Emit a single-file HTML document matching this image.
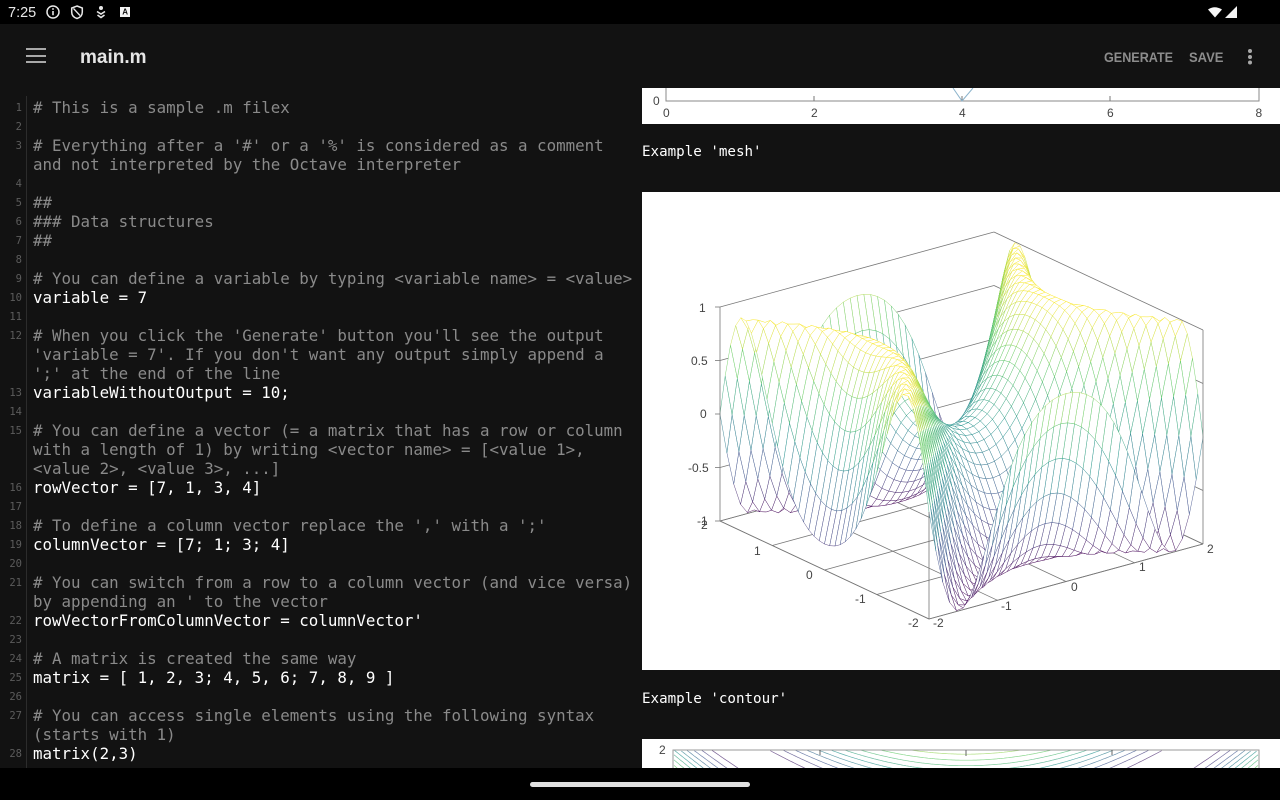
<!DOCTYPE html>
<html><head><meta charset="utf-8"><style>
html,body{margin:0;padding:0;background:#121212;width:1280px;height:800px;overflow:hidden}
#r{position:relative;width:1280px;height:800px;overflow:hidden;background:#121212}
.a{position:absolute}
#code{position:absolute;left:0;top:1px;width:640px;height:767px}
.c{position:absolute;left:33px;height:19px;line-height:19px;font:15.8px/19px "DejaVu Sans Mono","Liberation Mono",monospace;white-space:pre;color:#8a8a8a}
.w{color:#fff}
.n{position:absolute;left:0;width:22px;text-align:right;height:19px;font:10.5px/21px "DejaVu Sans Mono","Liberation Mono",monospace;color:#5c5c5c}
.e{position:absolute;left:642px;font:14.2px/20px "DejaVu Sans Mono","Liberation Mono",monospace;color:#fff;white-space:pre}
.b{position:absolute;top:47px;font:bold 14px/20px "Liberation Sans",sans-serif;color:#8c8c8c;transform-origin:0 50%;transform:scaleX(.9);white-space:pre}
svg text{font-family:"Liberation Sans",sans-serif;font-size:12px;fill:#444}
</style></head><body><div id="r">
<div class="a" style="left:0;top:0;width:1280px;height:24px;background:#000"></div>
<div class="a" style="left:8px;top:4px;font:14.5px/18px 'Liberation Sans',sans-serif;color:#e8e8e8">7:25</div>
<svg class="a" style="left:0;top:0" width="1280" height="24" viewBox="0 0 1280 24">
<circle cx="53" cy="12" r="6" fill="none" stroke="#e8e8e8" stroke-width="1.5"/><rect x="52.2" y="11" width="1.6" height="4.2" fill="#e8e8e8"/><rect x="52.2" y="8.2" width="1.6" height="1.6" fill="#e8e8e8"/>
<path d="M77 6l5.3 2v4c0 3.300-2.200 5.600-5.300 6.500-3.100-.9-5.300-3.200-5.300-6.500V8z" fill="none" stroke="#e8e8e8" stroke-width="1.5"/><path d="M73.500 8.500l6.500 7" stroke="#e8e8e8" stroke-width="1.3"/>
<path d="M97 11.500l4 2.500 4-2.500M97.500 15l3.500 2.500 3.500-2.500" fill="none" stroke="#e8e8e8" stroke-width="1.6"/><circle cx="101" cy="8" r="2" fill="#e8e8e8"/>
<rect x="120" y="7" width="10" height="10" fill="#f4f4f4"/><text x="122.3" y="14.5" style="font-size:8px;font-weight:bold;fill:#111">A</text>
<path d="M1208 9.500q6.500-4.500 14 0l-7 8z" fill="#f8f8f8"/><path d="M1237 6v12h-12z" fill="#f4f4f4"/>
</svg>
<svg class="a" style="left:0;top:24px" width="1280" height="64" viewBox="0 24 1280 64">
<rect x="26" y="48" width="20" height="2" fill="#a8a8a8"/><rect x="26" y="55" width="20" height="2" fill="#a8a8a8"/><rect x="26" y="61" width="20" height="2" fill="#a8a8a8"/>
<circle cx="1250" cy="51" r="2" fill="#a8a8a8"/><circle cx="1250" cy="57" r="2" fill="#a8a8a8"/><circle cx="1250" cy="62.5" r="2" fill="#a8a8a8"/>
</svg>
<div class="a" style="left:80px;top:46px;font:bold 19px/24px 'Liberation Sans',sans-serif;color:#e6e6e6">main.m</div>
<div class="b" style="left:1104px">GENERATE</div>
<div class="b" style="left:1189px;transform:scaleX(.93)">SAVE</div>

<div class="a" style="left:26px;top:96px;width:1px;height:672px;background:#2c2c2c"></div>
<div id="code">
<div class="n" style="top:97px">1</div><div class="c" style="top:97px"># This is a sample .m filex</div>
<div class="n" style="top:116px">2</div>
<div class="n" style="top:135px">3</div><div class="c" style="top:135px"># Everything after a '#' or a '%' is considered as a comment</div>
<div class="c" style="top:154px">and not interpreted by the Octave interpreter</div>
<div class="n" style="top:173px">4</div>
<div class="n" style="top:192px">5</div><div class="c" style="top:192px">##</div>
<div class="n" style="top:211px">6</div><div class="c" style="top:211px">### Data structures</div>
<div class="n" style="top:230px">7</div><div class="c" style="top:230px">##</div>
<div class="n" style="top:249px">8</div>
<div class="n" style="top:268px">9</div><div class="c" style="top:268px"># You can define a variable by typing &lt;variable name&gt; = &lt;value&gt;</div>
<div class="n" style="top:287px">10</div><div class="c w" style="top:287px">variable = 7</div>
<div class="n" style="top:306px">11</div>
<div class="n" style="top:325px">12</div><div class="c" style="top:325px"># When you click the 'Generate' button you'll see the output</div>
<div class="c" style="top:344px">'variable = 7'. If you don't want any output simply append a</div>
<div class="c" style="top:363px">';' at the end of the line</div>
<div class="n" style="top:382px">13</div><div class="c w" style="top:382px">variableWithoutOutput = 10;</div>
<div class="n" style="top:401px">14</div>
<div class="n" style="top:420px">15</div><div class="c" style="top:420px"># You can define a vector (= a matrix that has a row or column</div>
<div class="c" style="top:439px">with a length of 1) by writing &lt;vector name&gt; = [&lt;value 1&gt;,</div>
<div class="c" style="top:458px">&lt;value 2&gt;, &lt;value 3&gt;, ...]</div>
<div class="n" style="top:477px">16</div><div class="c w" style="top:477px">rowVector = [7, 1, 3, 4]</div>
<div class="n" style="top:496px">17</div>
<div class="n" style="top:515px">18</div><div class="c" style="top:515px"># To define a column vector replace the ',' with a ';'</div>
<div class="n" style="top:534px">19</div><div class="c w" style="top:534px">columnVector = [7; 1; 3; 4]</div>
<div class="n" style="top:553px">20</div>
<div class="n" style="top:572px">21</div><div class="c" style="top:572px"># You can switch from a row to a column vector (and vice versa)</div>
<div class="c" style="top:591px">by appending an ' to the vector</div>
<div class="n" style="top:610px">22</div><div class="c w" style="top:610px">rowVectorFromColumnVector = columnVector'</div>
<div class="n" style="top:629px">23</div>
<div class="n" style="top:648px">24</div><div class="c" style="top:648px"># A matrix is created the same way</div>
<div class="n" style="top:667px">25</div><div class="c w" style="top:667px">matrix = [ 1, 2, 3; 4, 5, 6; 7, 8, 9 ]</div>
<div class="n" style="top:686px">26</div>
<div class="n" style="top:705px">27</div><div class="c" style="top:705px"># You can access single elements using the following syntax</div>
<div class="c" style="top:724px">(starts with 1)</div>
<div class="n" style="top:743px">28</div><div class="c w" style="top:743px">matrix(2,3)</div>
</div>

<div class="a" style="left:642px;top:88px;width:638px;height:36px;background:#fff"></div>
<svg class="a" style="left:642px;top:88px" width="638" height="36" viewBox="642 88 638 36">
<path d="M666 88V101H1259V88" fill="none" stroke="#8a8a8a" stroke-width="1"/>
<path d="M814 101v-5M962 101v-5M1110 101v-5" stroke="#777" stroke-width="1"/>
<path d="M953 88l9 13 11-13" fill="none" stroke="#8cb4cc" stroke-width="1"/>
<text x="653" y="105">0</text><text x="663" y="117">0</text><text x="811" y="117">2</text><text x="959" y="117">4</text><text x="1107" y="117">6</text><text x="1255.5" y="117">8</text>
</svg>
<div class="e" style="top:142px">Example 'mesh'</div>

<div class="a" style="left:642px;top:192px;width:638px;height:478px;background:#fff"></div>
<svg id="m" class="a" style="left:642px;top:192px" width="638" height="478" viewBox="642 192 638 478">
<text x="699" y="312">1</text><text x="691" y="365">0.5</text><text x="700" y="418">0</text><text x="688" y="472">-0.5</text><text x="697" y="525">-1</text>
<text x="701" y="529">2</text><text x="754" y="555">1</text><text x="806" y="579">0</text><text x="855" y="603">-1</text><text x="908" y="627">-2</text>
<text x="933" y="627">-2</text><text x="1001" y="610">-1</text><text x="1071" y="591">0</text><text x="1139" y="571">1</text><text x="1207" y="553">2</text>
<g id="g"></g>
</svg>
<div class="e" style="top:689px">Example 'contour'</div>

<div class="a" style="left:642px;top:739px;width:638px;height:29px;background:#fff"></div>
<svg class="a" style="left:642px;top:739px" width="638" height="29" viewBox="642 739 638 29">
<g id="ct" fill="none" stroke-width=".7"></g>
<path d="M673 768V750H1259V768" fill="none" stroke="#999" stroke-width="1"/>
<text x="659" y="754">2</text>
<path d="M820 750v5M966 750v6M1112 750v5" stroke="#666" stroke-width="1"/>
</svg>

<div class="a" style="left:0;top:768px;width:1280px;height:32px;background:#000"></div>
<div class="a" style="left:530px;top:782px;width:220px;height:5px;border-radius:3px;background:#e0e0e0"></div>
</div>
<script>
(function(){
var F=[929,619],R=[1203,544],L=[720,521];
function P(u,v,z){var a=(u+2)/4,b=(v+2)/4;return [F[0]+a*(R[0]-F[0])+b*(L[0]-F[0]),F[1]+a*(R[1]-F[1])+b*(L[1]-F[1])-(z+1)*107];}
function Z(u,v){return Math.sin(u*u-v*v);}
var stops=[[68,1,84],[59,82,139],[33,145,140],[94,201,98],[253,231,37]];
function col(z){
 var t=Math.max(0,Math.min(1,(z+1)/2))*4,i=Math.min(3,Math.floor(t)),f=t-i,c=[0,1,2].map(function(k){return Math.round(stops[i][k]+(stops[i+1][k]-stops[i][k])*f)});
 return 'rgb('+c.join(',')+')';
}
function s(p){return p[0].toFixed(1)+' '+p[1].toFixed(1);}
var h='';
function line(a,b){h+='<path d="M'+s(a)+'L'+s(b)+'" stroke="#777" stroke-width=".8" fill="none"/>';}
function edge(u1,v1,u2,v2){var z1=Z(u1,v1),z2=Z(u2,v2);h+='<path d="M'+s(P(u1,v1,z1))+'L'+s(P(u2,v2,z2))+'" stroke="'+col((z1+z2)/2)+'" stroke-width=".5" stroke-opacity=".85" fill="none"/>';}
var zs=[-1,-.5,0,.5,1],i,iu,iv;
for(i=0;i<5;i++){line(P(-2,2,zs[i]),P(2,2,zs[i]));line(P(2,2,zs[i]),P(2,-2,zs[i]));}
for(i=-2;i<=2;i++){line(P(i,-2,-1),P(i,2,-1));line(P(-2,i,-1),P(2,i,-1));}
var N=40,d=4/N;
for(iv=N-1;iv>=0;iv--){
 for(iu=N-1;iu>=0;iu--){
  var u=-2+iu*d,v=-2+iv*d,u2=u+d,v2=v+d;
  h+='<path d="M'+s(P(u,v,Z(u,v)))+'L'+s(P(u2,v,Z(u2,v)))+'L'+s(P(u2,v2,Z(u2,v2)))+'L'+s(P(u,v2,Z(u,v2)))+'Z" fill="#fff"/>';
  edge(u,v,u2,v);edge(u,v2,u2,v2);edge(u,v,u,v2);edge(u2,v,u2,v2);
 }
}
line(P(-2,2,-1),P(-2,2,1));line(P(2,-2,-1),P(2,-2,1));line(P(-2,-2,-1),[929,512]);
line(P(-2,-2,-1),P(2,-2,-1));line(P(-2,-2,-1),P(-2,2,-1));
for(i=0;i<5;i++){var q1=P(-2,2,zs[i]);line(q1,[q1[0]-5,q1[1]]);}
document.getElementById('g').innerHTML=h;

var ct='';
for(var kk=-5;kk<=5;kk++){(function(l){
 var as=Math.asin(l),cs=[as,Math.PI-as,as-2*Math.PI,-Math.PI-as];
 cs.forEach(function(c){
  if(c<-4.05||c>1.2)return;
  var dd='',pen=false;
  for(var x=-2;x<=2.001;x+=.01){
   var y2=x*x-c,ok=y2>=3.2&&y2<=4;
   if(ok){var Y=750+(2-Math.sqrt(y2))*116,X=966+146*x;dd+=(pen?'L':'M')+X.toFixed(1)+' '+Y.toFixed(1);pen=true;}else pen=false;
  }
  if(dd)ct+='<path d="'+dd+'" stroke="'+col(l)+'" stroke-opacity=".7"/>';
 });
})(kk*.164);}
document.getElementById('ct').innerHTML=ct;
})();
</script>
</body></html>
